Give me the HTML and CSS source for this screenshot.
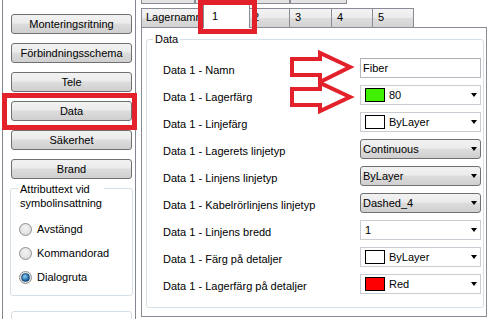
FILE: index.html
```html
<!DOCTYPE html>
<html lang="sv">
<head>
    <meta charset="UTF-8">
    <title>Lagerinställningar</title>
    <link rel="stylesheet" href="styles.css">
</head>
<body>
    <div class="window">
        <!-- Left column with category buttons -->
        <div class="side">
            <button class="side-btn">Monteringsritning</button>
            <button class="side-btn">Förbindningsschema</button>
            <button class="side-btn">Tele</button>
            <button class="side-btn">Data</button>
            <button class="side-btn">Säkerhet</button>
            <button class="side-btn">Brand</button>

            <div class="attr-group">
                <span class="attr-caption">Attributtext vid<br>symbolinsattning</span>
                <label class="radio-row"><span class="radio"></span>Avstängd</label>
                <label class="radio-row"><span class="radio"></span>Kommandorad</label>
                <label class="radio-row"><span class="radio checked"></span>Dialogruta</label>
            </div>
            <div class="next-group"></div>
        </div>

        <!-- Tab control -->
        <div class="tabctl">
            <div class="tabs-back">
                <div class="tab-back tb-a"></div>
                <div class="tab-back tb-b"></div>
                <div class="tab-back tb-c"></div>
            </div>
            <div class="tabs">
                <div class="tab tab-wide">Lagernamn</div>
                <div class="tab selected">1</div>
                <div class="tab">2</div>
                <div class="tab">3</div>
                <div class="tab tab-narrow">4</div>
                <div class="tab tab-narrow">5</div>
            </div>
            <div class="tab-page">
                <fieldset class="data-group">
                    <legend>Data</legend>

                    <div class="field-label">Data 1 - Namn</div>
                    <div class="textbox">Fiber</div>

                    <div class="field-label">Data 1 - Lagerfärg</div>
                    <div class="combo"><span class="swatch green"></span>80<span class="caret"></span></div>

                    <div class="field-label">Data 1 - Linjefärg</div>
                    <div class="combo"><span class="swatch"></span>ByLayer<span class="caret"></span></div>

                    <div class="field-label">Data 1 - Lagerets linjetyp</div>
                    <div class="combo dropdown">Continuous<span class="caret"></span></div>

                    <div class="field-label">Data 1 - Linjens linjetyp</div>
                    <div class="combo dropdown">ByLayer<span class="caret"></span></div>

                    <div class="field-label">Data 1 - Kabelrörlinjens linjetyp</div>
                    <div class="combo dropdown">Dashed_4<span class="caret"></span></div>

                    <div class="field-label">Data 1 - Linjens bredd</div>
                    <div class="combo plain">1<span class="caret"></span></div>

                    <div class="field-label">Data 1 - Färg på detaljer</div>
                    <div class="combo"><span class="swatch"></span>ByLayer<span class="caret"></span></div>

                    <div class="field-label">Data 1 - Lagerfärg på detaljer</div>
                    <div class="combo"><span class="swatch red"></span>Red<span class="caret"></span></div>
                </fieldset>
            </div>
        </div>
    </div>

    <!-- Red annotation marks drawn over the dialog -->
    <div class="mark mark-tab"></div>
    <div class="mark mark-data"></div>
    <svg class="arrows" width="70" height="68" viewBox="0 0 70 68">
        <polygon points="6,11 34,11 34,5 64,19 34,34 34,27 6,27" />
        <polygon points="6,41 34,41 34,35 64,49 34,63 34,57 6,57" />
    </svg>
</body>
</html>
```

FILE: styles.css
```css
* {
    box-sizing: border-box;
}

body {
    margin: 0;
    width: 489px;
    height: 319px;
    overflow: hidden;
    background: #fff;
    color: #000;
    font: 11px "Liberation Sans", Arial, sans-serif;
    position: relative;
}

.window {
    display: flex;
    gap: 5px;
    padding-left: 2px;
    height: 319px;
}

/* Left column */
.side {
    width: 134px;
    height: 319px;
    flex-shrink: 0;
    border: 1px solid #828790;
    border-top: none;
    border-bottom: none;
    padding: 14px 3px 0 8px;
    overflow: hidden;
}

.side-btn {
    display: block;
    width: 121px;
    height: 20px;
    margin: 0 0 9px 0;
    padding: 0;
    border: 1px solid #707070;
    border-radius: 3px;
    background: linear-gradient(#f2f2f2, #ebebeb 45%, #dddddd 50%, #cfcfcf);
    font: inherit;
    color: #000;
    text-align: center;
}

.attr-group {
    width: 123px;
    height: 108px;
    margin: 6px 0 0 -1px;
    border: 1px solid #d5dfe5;
    border-radius: 3px;
}

.attr-caption {
    display: inline-block;
    margin: -7px 0 0 7px;
    padding: 0 2px;
    background: #fff;
    line-height: 14px;
}

.radio-row {
    display: flex;
    align-items: center;
    gap: 5px;
    height: 16px;
    margin: 8px 0 0 8px;
}

.attr-caption + .radio-row {
    margin-top: 11px;
}

.radio {
    width: 13px;
    height: 13px;
    border-radius: 50%;
    border: 1px solid #8e8f8f;
    background: radial-gradient(circle at 50% 40%, #f4f4f4, #d6d6d6);
    display: flex;
    align-items: center;
    justify-content: center;
}

.radio.checked::after {
    content: "";
    width: 7px;
    height: 7px;
    border-radius: 50%;
    background: radial-gradient(circle at 40% 35%, #8ad0f7, #1c5f9c 70%);
    border: 1px solid #1a4a78;
}

.next-group {
    width: 121px;
    height: 20px;
    margin-top: 15px;
    border: 1px solid #d5dfe5;
    border-radius: 3px;
}

/* Tab control */
.tabctl {
    width: 346px;
    display: flex;
    flex-direction: column;
}

.tabs-back {
    height: 4px;
    display: flex;
}

.tab-back {
    height: 4px;
    border: 1px solid #898c95;
    border-top: none;
    background: #e3e3e3;
}

.tb-a { width: 54px; }
.tb-b { width: 95px; }
.tb-c { width: 57px; }

.tabs {
    height: 23px;
    display: flex;
    align-items: flex-end;
    position: relative;
    z-index: 1;
}

.tab {
    width: 42px;
    height: 19px;
    padding-left: 5px;
    line-height: 17px;
    border: 1px solid #898c95;
    border-bottom: none;
    background: linear-gradient(#f3f3f3, #ebebeb 50%, #dddddd 51%, #d3d3d3);
    white-space: nowrap;
    overflow: hidden;
}

.tab + .tab {
    border-left: none;
}

.tab-wide {
    width: 64px;
    padding-left: 4px;
}

.tab-narrow {
    width: 41px;
}

.tab.selected {
    width: 47px;
    height: 24px;
    margin: 0 -2px -1px;
    padding: 3px 0 0 8px;
    border-left: 1px solid #898c95;
    background: #fff;
    position: relative;
    z-index: 2;
}

.tab.selected + .tab {
    border-left: none;
}

.tab-page {
    height: 290px;
    border: 1px solid #898c95;
    background: #fff;
}

.data-group {
    width: 338px;
    margin: 5px 0 0 4px;
    padding: 12px 2px 0 16px;
    border: 1px solid #d5dfe5;
    border-radius: 3px;
    height: 275px;
    display: grid;
    grid-template-columns: 197px 121px;
    grid-auto-rows: 20px;
    row-gap: 7px;
    align-content: start;
}

.data-group legend {
    margin-left: -10px;
    padding: 0 2px;
    line-height: 13px;
}

.field-label {
    line-height: 20px;
    padding-top: 2px;
    white-space: nowrap;
}

.textbox {
    border: 1px solid #b5b8c0;
    border-top-color: #abadb3;
    padding-left: 2px;
    line-height: 18px;
}

.combo {
    display: flex;
    align-items: center;
    border: 1px solid #c9ccd2;
    padding-left: 4px;
    background: #fff;
}

.combo.dropdown {
    border: 1px solid #707070;
    border-radius: 3px;
    padding-left: 2px;
    background: linear-gradient(#f2f2f2, #ebebeb 45%, #dddddd 50%, #cfcfcf);
}

.swatch {
    width: 20px;
    height: 14px;
    border: 1px solid #000;
    background: #fff;
    margin-right: 4px;
}

.swatch.green {
    background: #40f000;
}

.swatch.red {
    background: #ff0000;
}

.caret {
    margin-left: auto;
    margin-right: 3px;
    border-left: 3.5px solid transparent;
    border-right: 3.5px solid transparent;
    border-top: 4px solid #000;
}

/* Annotation overlays */
.mark {
    position: absolute;
    border: 5px solid #e3212b;
    z-index: 5;
}

.mark-tab {
    left: 198px;
    top: 0;
    width: 59px;
    height: 34px;
}

.mark-data {
    left: 2px;
    top: 93px;
    width: 135px;
    height: 37px;
}

.arrows {
    position: absolute;
    left: 286px;
    top: 48px;
    z-index: 5;
}

.arrows polygon {
    fill: #fff;
    stroke: #e3212b;
    stroke-width: 4;
}
```
